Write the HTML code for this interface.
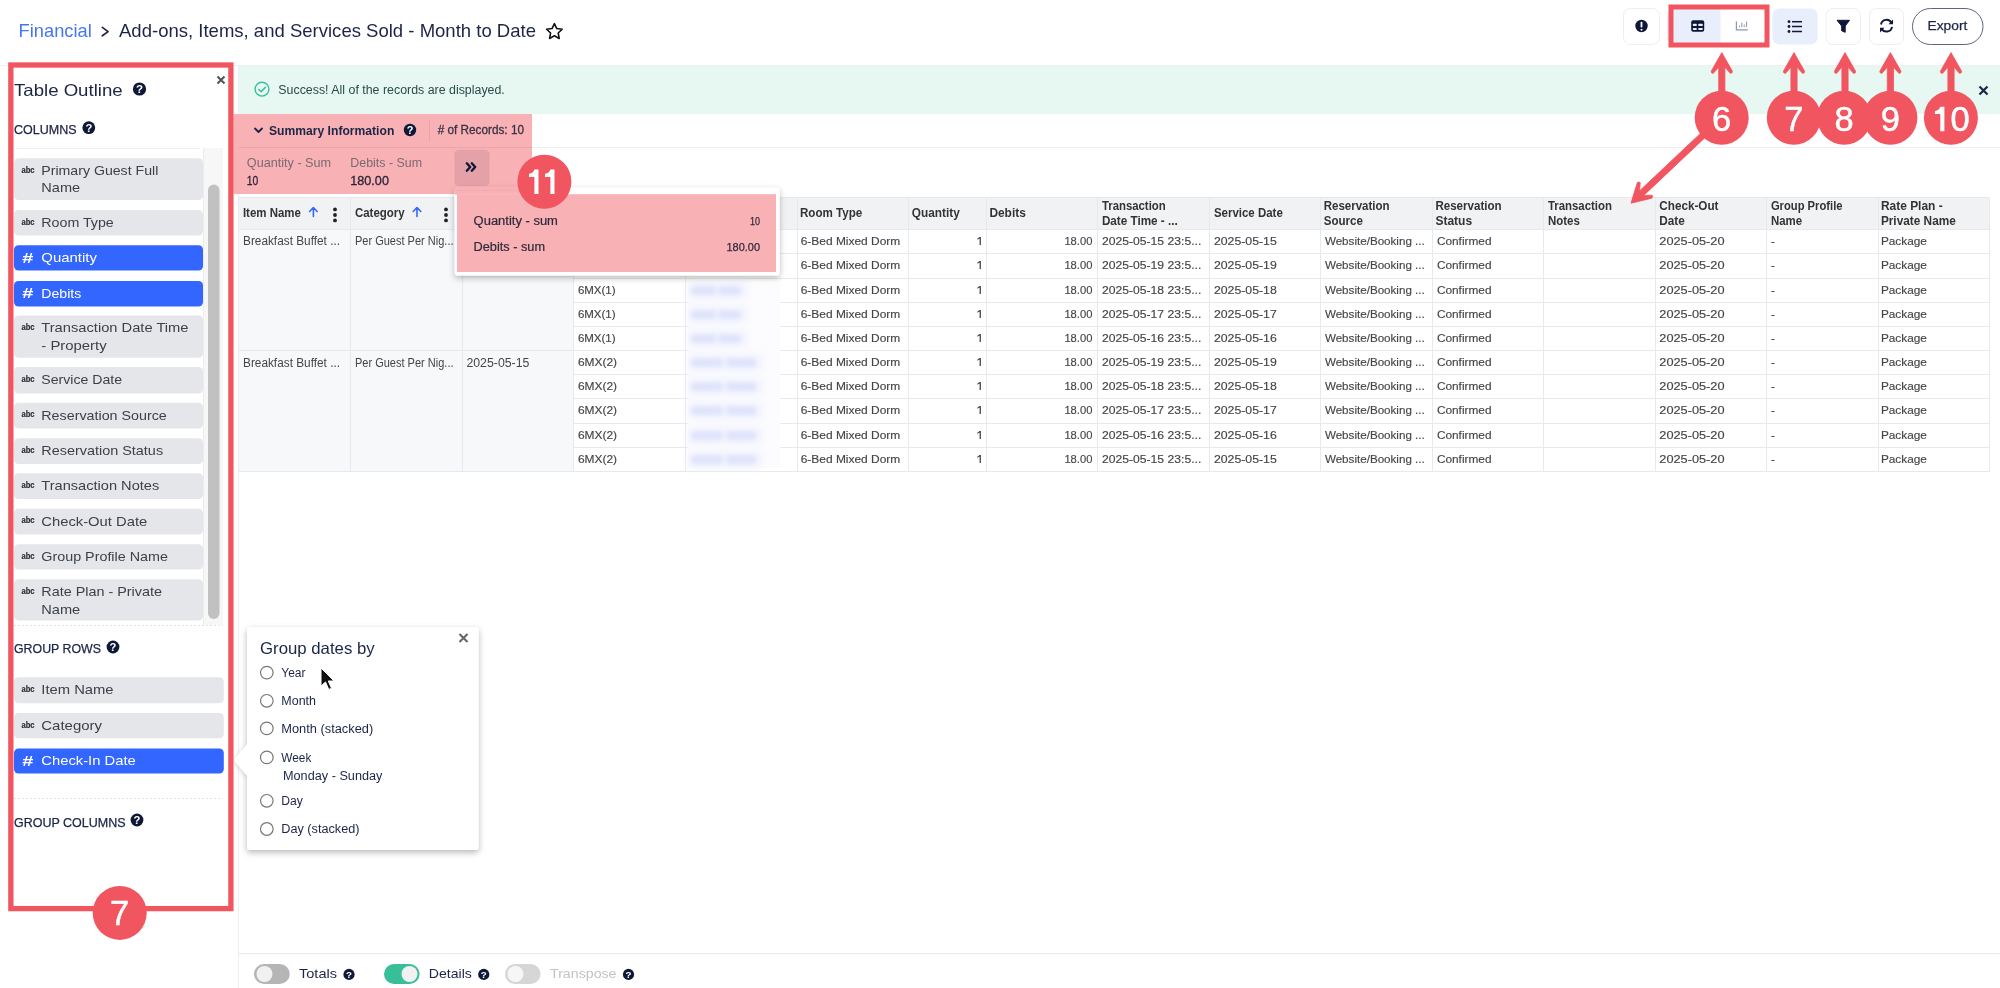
<!DOCTYPE html>
<html><head><meta charset="utf-8"><title>Add-ons, Items, and Services Sold - Month to Date</title>
<style>
html,body{margin:0;padding:0;background:#fff;width:2000px;height:988px;overflow:hidden}
svg{display:block;font-family:"Liberation Sans",sans-serif;will-change:transform}
</style></head><body>
<svg width="2000" height="988" viewBox="0 0 2000 988">
<rect width="2000" height="988" fill="#fff"/>
<text x="18.6" y="37.3" font-size="17.8" font-weight="400" fill="#4675f5" text-anchor="start" textLength="73.2" lengthAdjust="spacingAndGlyphs">Financial</text>
<path d="M102.3 27.4 L108.1 31.6 L102.3 35.8" fill="none" stroke="#1b2547" stroke-width="1.7" stroke-linecap="round" stroke-linejoin="round"/>
<text x="119.0" y="37.3" font-size="17.8" font-weight="400" fill="#1b2547" text-anchor="start" textLength="417.0" lengthAdjust="spacingAndGlyphs">Add-ons, Items, and Services Sold - Month to Date</text>
<polygon points="554.40,23.60 556.75,28.56 562.20,29.27 558.20,33.04 559.22,38.43 554.40,35.80 549.58,38.43 550.60,33.04 546.60,29.27 552.05,28.56" fill="none" stroke="#111" stroke-width="1.6" stroke-linejoin="round"/>
<line x1="0.00" y1="65.50" x2="2000.00" y2="65.50" stroke="#eef0f3" stroke-width="1"/>
<rect x="1623.50" y="8.50" width="36.00" height="36.00" rx="7" fill="#fff" stroke="#eceef2" stroke-width="1"/>
<circle cx="1641.50" cy="26.00" r="6.20" fill="#0f1838"/>
<rect x="1640.60" y="21.80" width="1.80" height="5.70" rx="0.8" fill="#fff"/>
<circle cx="1641.50" cy="29.70" r="1.00" fill="#fff"/>
<rect x="1667.50" y="8.50" width="98.00" height="36.00" rx="7" fill="#fff" stroke="#eceef2" stroke-width="1"/>
<path d="M1674 9 H1720.5 V44 H1674 A6 6 0 0 1 1668 38 V15 A6 6 0 0 1 1674 9 Z" fill="#e8eefc"/>
<rect x="1691.20" y="20.20" width="13.00" height="11.60" rx="2.0" fill="#0d1633"/>
<rect x="1692.80" y="23.80" width="4.00" height="2.20" rx="0.8" fill="#e8eefc"/>
<rect x="1698.20" y="23.80" width="4.60" height="2.20" rx="0.8" fill="#e8eefc"/>
<rect x="1692.80" y="28.00" width="4.00" height="2.00" rx="0.8" fill="#e8eefc"/>
<rect x="1698.20" y="28.00" width="4.60" height="2.00" rx="0.8" fill="#e8eefc"/>
<path d="M1736.4 21.4 V29.9 H1747.8" fill="none" stroke="#8c96b0" stroke-width="1.2"/>
<line x1="1739.60" y1="25.50" x2="1739.60" y2="27.20" stroke="#8c96b0" stroke-width="1.0"/>
<line x1="1741.80" y1="22.50" x2="1741.80" y2="27.20" stroke="#8c96b0" stroke-width="1.0"/>
<line x1="1744.20" y1="24.50" x2="1744.20" y2="27.20" stroke="#8c96b0" stroke-width="1.0"/>
<line x1="1746.60" y1="21.50" x2="1746.60" y2="27.20" stroke="#8c96b0" stroke-width="1.0"/>
<rect x="1671.00" y="7.00" width="96.00" height="38.00" rx="0" fill="none" stroke="#f1555f" stroke-width="5"/>
<rect x="1772.40" y="8.40" width="45.20" height="36.00" rx="7" fill="#e8eefc"/>
<circle cx="1789.00" cy="21.70" r="1.40" fill="#0f1838"/>
<circle cx="1789.00" cy="26.50" r="1.40" fill="#0f1838"/>
<circle cx="1789.00" cy="31.50" r="1.40" fill="#0f1838"/>
<line x1="1792.00" y1="21.70" x2="1802.00" y2="21.70" stroke="#0f1838" stroke-width="1.5"/>
<line x1="1792.00" y1="26.50" x2="1802.00" y2="26.50" stroke="#0f1838" stroke-width="1.5"/>
<line x1="1792.00" y1="31.50" x2="1802.00" y2="31.50" stroke="#0f1838" stroke-width="1.5"/>
<rect x="1826.00" y="8.50" width="34.50" height="36.00" rx="7" fill="#fff" stroke="#eceef2" stroke-width="1"/>
<path d="M1837 20.3 H1849.5 L1845.2 26 V32.3 L1841.7 30.8 V26 Z" fill="#0f1838" stroke="#0f1838" stroke-width="1" stroke-linejoin="round"/>
<rect x="1869.50" y="8.50" width="34.00" height="36.00" rx="7" fill="#fff" stroke="#eceef2" stroke-width="1"/>
<path d="M1881 24.5 A5.6 5.6 0 0 1 1891.5 22.8" fill="none" stroke="#0f1838" stroke-width="1.9"/>
<path d="M1892 26.8 A5.6 5.6 0 0 1 1881.5 28.5" fill="none" stroke="#0f1838" stroke-width="1.9"/>
<path d="M1893 19.5 V24.2 H1888.5 Z" fill="#0f1838"/>
<path d="M1880 32.5 V27.8 H1884.5 Z" fill="#0f1838"/>
<rect x="1912.50" y="8.50" width="70.50" height="36.00" rx="18" fill="#fff" stroke="#5e6680" stroke-width="1"/>
<text x="1927.5" y="29.8" font-size="13.5" font-weight="400" fill="#1b2547" text-anchor="start" textLength="39.8" lengthAdjust="spacingAndGlyphs" stroke="#1b2547" stroke-width="0.25">Export</text>
<line x1="238.50" y1="65.00" x2="238.50" y2="988.00" stroke="#eceef1" stroke-width="1"/>
<text x="14.0" y="95.5" font-size="16.5" font-weight="400" fill="#1b2547" text-anchor="start" textLength="108.6" lengthAdjust="spacingAndGlyphs">Table Outline</text>
<circle cx="139.50" cy="89.00" r="6.60" fill="#0f1838"/>
<text x="139.5" y="93.1" font-size="11.549999999999999" font-weight="700" fill="#ffffff" text-anchor="middle">?</text>
<path d="M217.5 76.5 L224.5 83.5 M224.5 76.5 L217.5 83.5" fill="none" stroke="#555" stroke-width="2.1"/>
<text x="14.0" y="134.0" font-size="12.3" font-weight="400" fill="#1b2547" text-anchor="start" textLength="62.5" lengthAdjust="spacingAndGlyphs" stroke="#1b2547" stroke-width="0.25">COLUMNS</text>
<circle cx="88.80" cy="127.70" r="6.40" fill="#0f1838"/>
<text x="88.8" y="131.7" font-size="11.200000000000001" font-weight="700" fill="#ffffff" text-anchor="middle">?</text>
<line x1="16.00" y1="148.50" x2="200.00" y2="148.50" stroke="#eeeeee" stroke-width="1"/>
<rect x="203.00" y="148.00" width="20.00" height="477.00" rx="0" fill="#f7f7f7"/>
<line x1="203.50" y1="148.00" x2="203.50" y2="625.00" stroke="#ececec" stroke-width="1"/>
<rect x="208.00" y="184.60" width="11.50" height="434.40" rx="5.7" fill="#c1c1c1"/>
<rect x="14.00" y="158.20" width="189.00" height="41.80" rx="4.5" fill="#e5e6ea"/>
<text x="21.5" y="172.7" font-size="8.4" font-weight="700" fill="#2e3138" text-anchor="start" textLength="13.1" lengthAdjust="spacingAndGlyphs" stroke="#2e3138" stroke-width="0.2">abc</text>
<text x="41.3" y="174.9" font-size="13.5" font-weight="400" fill="#3d4047" text-anchor="start" textLength="117.0" lengthAdjust="spacingAndGlyphs">Primary Guest Full</text>
<text x="41.3" y="192.4" font-size="13.5" font-weight="400" fill="#3d4047" text-anchor="start" textLength="38.8" lengthAdjust="spacingAndGlyphs">Name</text>
<rect x="14.00" y="210.00" width="189.00" height="25.60" rx="4.5" fill="#e5e6ea"/>
<text x="21.5" y="224.5" font-size="8.4" font-weight="700" fill="#2e3138" text-anchor="start" textLength="13.1" lengthAdjust="spacingAndGlyphs" stroke="#2e3138" stroke-width="0.2">abc</text>
<text x="41.3" y="226.7" font-size="13.5" font-weight="400" fill="#3d4047" text-anchor="start" textLength="72.5" lengthAdjust="spacingAndGlyphs">Room Type</text>
<rect x="14.00" y="245.30" width="189.00" height="25.30" rx="4.5" fill="#3366ff"/>
<text x="22.2" y="262.5" font-size="14" font-weight="700" fill="#fff" text-anchor="start" textLength="11.1" lengthAdjust="spacingAndGlyphs">#</text>
<text x="41.3" y="262.0" font-size="13.5" font-weight="400" fill="#ffffff" text-anchor="start" textLength="55.6" lengthAdjust="spacingAndGlyphs">Quantity</text>
<rect x="14.00" y="281.00" width="189.00" height="25.50" rx="4.5" fill="#3366ff"/>
<text x="22.2" y="298.2" font-size="14" font-weight="700" fill="#fff" text-anchor="start" textLength="11.1" lengthAdjust="spacingAndGlyphs">#</text>
<text x="41.3" y="297.7" font-size="13.5" font-weight="400" fill="#ffffff" text-anchor="start" textLength="40.0" lengthAdjust="spacingAndGlyphs">Debits</text>
<rect x="14.00" y="315.40" width="189.00" height="42.30" rx="4.5" fill="#e5e6ea"/>
<text x="21.5" y="329.9" font-size="8.4" font-weight="700" fill="#2e3138" text-anchor="start" textLength="13.1" lengthAdjust="spacingAndGlyphs" stroke="#2e3138" stroke-width="0.2">abc</text>
<text x="41.3" y="332.1" font-size="13.5" font-weight="400" fill="#3d4047" text-anchor="start" textLength="147.2" lengthAdjust="spacingAndGlyphs">Transaction Date Time</text>
<text x="41.3" y="349.6" font-size="13.5" font-weight="400" fill="#3d4047" text-anchor="start" textLength="65.3" lengthAdjust="spacingAndGlyphs">- Property</text>
<rect x="14.00" y="367.00" width="189.00" height="26.50" rx="4.5" fill="#e5e6ea"/>
<text x="21.5" y="381.5" font-size="8.4" font-weight="700" fill="#2e3138" text-anchor="start" textLength="13.1" lengthAdjust="spacingAndGlyphs" stroke="#2e3138" stroke-width="0.2">abc</text>
<text x="41.3" y="383.7" font-size="13.5" font-weight="400" fill="#3d4047" text-anchor="start" textLength="80.8" lengthAdjust="spacingAndGlyphs">Service Date</text>
<rect x="14.00" y="402.80" width="189.00" height="25.80" rx="4.5" fill="#e5e6ea"/>
<text x="21.5" y="417.3" font-size="8.4" font-weight="700" fill="#2e3138" text-anchor="start" textLength="13.1" lengthAdjust="spacingAndGlyphs" stroke="#2e3138" stroke-width="0.2">abc</text>
<text x="41.3" y="419.5" font-size="13.5" font-weight="400" fill="#3d4047" text-anchor="start" textLength="125.5" lengthAdjust="spacingAndGlyphs">Reservation Source</text>
<rect x="14.00" y="438.20" width="189.00" height="25.80" rx="4.5" fill="#e5e6ea"/>
<text x="21.5" y="452.7" font-size="8.4" font-weight="700" fill="#2e3138" text-anchor="start" textLength="13.1" lengthAdjust="spacingAndGlyphs" stroke="#2e3138" stroke-width="0.2">abc</text>
<text x="41.3" y="454.9" font-size="13.5" font-weight="400" fill="#3d4047" text-anchor="start" textLength="121.8" lengthAdjust="spacingAndGlyphs">Reservation Status</text>
<rect x="14.00" y="473.30" width="189.00" height="25.80" rx="4.5" fill="#e5e6ea"/>
<text x="21.5" y="487.8" font-size="8.4" font-weight="700" fill="#2e3138" text-anchor="start" textLength="13.1" lengthAdjust="spacingAndGlyphs" stroke="#2e3138" stroke-width="0.2">abc</text>
<text x="41.3" y="490.0" font-size="13.5" font-weight="400" fill="#3d4047" text-anchor="start" textLength="118.0" lengthAdjust="spacingAndGlyphs">Transaction Notes</text>
<rect x="14.00" y="508.80" width="189.00" height="25.80" rx="4.5" fill="#e5e6ea"/>
<text x="21.5" y="523.3" font-size="8.4" font-weight="700" fill="#2e3138" text-anchor="start" textLength="13.1" lengthAdjust="spacingAndGlyphs" stroke="#2e3138" stroke-width="0.2">abc</text>
<text x="41.3" y="525.5" font-size="13.5" font-weight="400" fill="#3d4047" text-anchor="start" textLength="106.0" lengthAdjust="spacingAndGlyphs">Check-Out Date</text>
<rect x="14.00" y="544.20" width="189.00" height="25.40" rx="4.5" fill="#e5e6ea"/>
<text x="21.5" y="558.7" font-size="8.4" font-weight="700" fill="#2e3138" text-anchor="start" textLength="13.1" lengthAdjust="spacingAndGlyphs" stroke="#2e3138" stroke-width="0.2">abc</text>
<text x="41.3" y="560.9" font-size="13.5" font-weight="400" fill="#3d4047" text-anchor="start" textLength="126.6" lengthAdjust="spacingAndGlyphs">Group Profile Name</text>
<rect x="14.00" y="579.30" width="189.00" height="41.10" rx="4.5" fill="#e5e6ea"/>
<text x="21.5" y="593.8" font-size="8.4" font-weight="700" fill="#2e3138" text-anchor="start" textLength="13.1" lengthAdjust="spacingAndGlyphs" stroke="#2e3138" stroke-width="0.2">abc</text>
<text x="41.3" y="596.0" font-size="13.5" font-weight="400" fill="#3d4047" text-anchor="start" textLength="120.7" lengthAdjust="spacingAndGlyphs">Rate Plan - Private</text>
<text x="41.3" y="613.5" font-size="13.5" font-weight="400" fill="#3d4047" text-anchor="start" textLength="38.9" lengthAdjust="spacingAndGlyphs">Name</text>
<line x1="14.00" y1="625.50" x2="223.00" y2="625.50" stroke="#e3e3e3" stroke-width="1" stroke-dasharray="2 2"/>
<text x="14.0" y="653.3" font-size="12.3" font-weight="400" fill="#1b2547" text-anchor="start" textLength="87.0" lengthAdjust="spacingAndGlyphs" stroke="#1b2547" stroke-width="0.25">GROUP ROWS</text>
<circle cx="113.00" cy="647.00" r="6.40" fill="#0f1838"/>
<text x="113.0" y="651.0" font-size="11.200000000000001" font-weight="700" fill="#ffffff" text-anchor="middle">?</text>
<rect x="14.00" y="677.30" width="209.80" height="26.00" rx="4.5" fill="#e5e6ea"/>
<text x="21.5" y="691.8" font-size="8.4" font-weight="700" fill="#2e3138" text-anchor="start" textLength="13.1" lengthAdjust="spacingAndGlyphs" stroke="#2e3138" stroke-width="0.2">abc</text>
<text x="41.3" y="694.0" font-size="13.5" font-weight="400" fill="#3d4047" text-anchor="start" textLength="72.3" lengthAdjust="spacingAndGlyphs">Item Name</text>
<rect x="14.00" y="713.00" width="209.80" height="25.20" rx="4.5" fill="#e5e6ea"/>
<text x="21.5" y="727.5" font-size="8.4" font-weight="700" fill="#2e3138" text-anchor="start" textLength="13.1" lengthAdjust="spacingAndGlyphs" stroke="#2e3138" stroke-width="0.2">abc</text>
<text x="41.3" y="729.7" font-size="13.5" font-weight="400" fill="#3d4047" text-anchor="start" textLength="60.8" lengthAdjust="spacingAndGlyphs">Category</text>
<rect x="14.00" y="748.40" width="209.80" height="25.10" rx="4.5" fill="#3366ff"/>
<text x="22.2" y="765.5" font-size="14" font-weight="700" fill="#fff" text-anchor="start" textLength="11.1" lengthAdjust="spacingAndGlyphs">#</text>
<text x="41.3" y="765.1" font-size="13.5" font-weight="400" fill="#ffffff" text-anchor="start" textLength="94.5" lengthAdjust="spacingAndGlyphs">Check-In Date</text>
<line x1="14.00" y1="798.50" x2="223.00" y2="798.50" stroke="#e3e3e3" stroke-width="1" stroke-dasharray="2 2"/>
<text x="14.0" y="826.9" font-size="12.3" font-weight="400" fill="#1b2547" text-anchor="start" textLength="111.6" lengthAdjust="spacingAndGlyphs" stroke="#1b2547" stroke-width="0.25">GROUP COLUMNS</text>
<circle cx="137.00" cy="820.00" r="6.40" fill="#0f1838"/>
<text x="137.0" y="824.0" font-size="11.200000000000001" font-weight="700" fill="#ffffff" text-anchor="middle">?</text>
<rect x="238.50" y="66.00" width="1761.50" height="48.00" rx="0" fill="#e7f8f3"/>
<circle cx="262.00" cy="89.20" r="6.90" fill="none" stroke="#3cbf98" stroke-width="1.4"/>
<path d="M258.8 89.5 L261.2 91.8 L265.4 87.2" fill="none" stroke="#3cbf98" stroke-width="1.5" stroke-linecap="round" stroke-linejoin="round"/>
<text x="278.3" y="93.7" font-size="12" font-weight="400" fill="#2b4a48" text-anchor="start" textLength="226.5" lengthAdjust="spacingAndGlyphs">Success! All of the records are displayed.</text>
<path d="M1979.5 86.5 L1987.5 94.5 M1987.5 86.5 L1979.5 94.5" fill="none" stroke="#1b2547" stroke-width="2.2"/>
<line x1="238.50" y1="147.50" x2="2000.00" y2="147.50" stroke="#eceef1" stroke-width="1"/>
<rect x="233.50" y="114.00" width="298.50" height="80.00" rx="0" fill="#f8b1b5"/>
<line x1="238.50" y1="147.50" x2="532.00" y2="147.50" stroke="#eba4aa" stroke-width="1"/>
<line x1="429.50" y1="120.00" x2="429.50" y2="142.00" stroke="#eba4aa" stroke-width="1"/>
<path d="M255 128.5 L258.5 132 L262 128.5" fill="none" stroke="#1b2547" stroke-width="1.8" stroke-linecap="round" stroke-linejoin="round"/>
<text x="269.0" y="134.9" font-size="12.5" font-weight="700" fill="#1b2547" text-anchor="start" textLength="125.3" lengthAdjust="spacingAndGlyphs">Summary Information</text>
<circle cx="410.00" cy="130.00" r="6.20" fill="#0f1838"/>
<text x="410.0" y="133.8" font-size="10.85" font-weight="700" fill="#ffffff" text-anchor="middle">?</text>
<text x="437.7" y="134.3" font-size="12" font-weight="400" fill="#3a3344" text-anchor="start" textLength="86.3" lengthAdjust="spacingAndGlyphs" stroke="#3a3344" stroke-width="0.3"># of Records: 10</text>
<text x="246.8" y="167.1" font-size="12" font-weight="400" fill="#7a6a72" text-anchor="start" textLength="84.3" lengthAdjust="spacingAndGlyphs">Quantity - Sum</text>
<text x="246.8" y="184.5" font-size="13" font-weight="400" fill="#2a2436" text-anchor="start" textLength="11.5" lengthAdjust="spacingAndGlyphs" stroke="#2a2436" stroke-width="0.3">10</text>
<text x="350.3" y="167.1" font-size="12" font-weight="400" fill="#7a6a72" text-anchor="start" textLength="71.7" lengthAdjust="spacingAndGlyphs">Debits - Sum</text>
<text x="350.3" y="184.5" font-size="13" font-weight="400" fill="#2a2436" text-anchor="start" textLength="38.6" lengthAdjust="spacingAndGlyphs" stroke="#2a2436" stroke-width="0.3">180.00</text>
<rect x="454.50" y="149.80" width="35.00" height="36.60" rx="4.5" fill="#e4a2a8"/>
<path d="M466.8 163.3 L470.2 167 L466.8 170.7 M471.8 163.3 L475.2 167 L471.8 170.7" fill="none" stroke="#0f1838" stroke-width="2.4" stroke-linecap="round" stroke-linejoin="round"/>
<rect x="238.50" y="197.50" width="1751.00" height="32.00" rx="0" fill="#f1f2f4"/>
<rect x="238.50" y="229.50" width="335.00" height="242.00" rx="0" fill="#f7f8fa"/>
<line x1="238.50" y1="197.50" x2="1989.50" y2="197.50" stroke="#e7e9ec" stroke-width="1"/>
<line x1="238.50" y1="229.50" x2="1989.50" y2="229.50" stroke="#e7e9ec" stroke-width="1"/>
<line x1="573.50" y1="253.50" x2="1989.50" y2="253.50" stroke="#e7e9ec" stroke-width="1"/>
<line x1="573.50" y1="278.50" x2="1989.50" y2="278.50" stroke="#e7e9ec" stroke-width="1"/>
<line x1="573.50" y1="302.50" x2="1989.50" y2="302.50" stroke="#e7e9ec" stroke-width="1"/>
<line x1="573.50" y1="326.50" x2="1989.50" y2="326.50" stroke="#e7e9ec" stroke-width="1"/>
<line x1="238.50" y1="350.50" x2="1989.50" y2="350.50" stroke="#e7e9ec" stroke-width="1"/>
<line x1="573.50" y1="374.50" x2="1989.50" y2="374.50" stroke="#e7e9ec" stroke-width="1"/>
<line x1="573.50" y1="398.50" x2="1989.50" y2="398.50" stroke="#e7e9ec" stroke-width="1"/>
<line x1="573.50" y1="423.50" x2="1989.50" y2="423.50" stroke="#e7e9ec" stroke-width="1"/>
<line x1="573.50" y1="447.50" x2="1989.50" y2="447.50" stroke="#e7e9ec" stroke-width="1"/>
<line x1="238.50" y1="471.50" x2="1989.50" y2="471.50" stroke="#e7e9ec" stroke-width="1"/>
<line x1="238.50" y1="197.50" x2="238.50" y2="471.50" stroke="#e7e9ec" stroke-width="1"/>
<line x1="350.50" y1="197.50" x2="350.50" y2="471.50" stroke="#e7e9ec" stroke-width="1"/>
<line x1="462.50" y1="197.50" x2="462.50" y2="471.50" stroke="#e7e9ec" stroke-width="1"/>
<line x1="573.50" y1="197.50" x2="573.50" y2="471.50" stroke="#e7e9ec" stroke-width="1"/>
<line x1="685.50" y1="197.50" x2="685.50" y2="471.50" stroke="#e7e9ec" stroke-width="1"/>
<line x1="797.50" y1="197.50" x2="797.50" y2="471.50" stroke="#e7e9ec" stroke-width="1"/>
<line x1="908.50" y1="197.50" x2="908.50" y2="471.50" stroke="#e7e9ec" stroke-width="1"/>
<line x1="986.50" y1="197.50" x2="986.50" y2="471.50" stroke="#e7e9ec" stroke-width="1"/>
<line x1="1097.50" y1="197.50" x2="1097.50" y2="471.50" stroke="#e7e9ec" stroke-width="1"/>
<line x1="1209.50" y1="197.50" x2="1209.50" y2="471.50" stroke="#e7e9ec" stroke-width="1"/>
<line x1="1320.50" y1="197.50" x2="1320.50" y2="471.50" stroke="#e7e9ec" stroke-width="1"/>
<line x1="1432.50" y1="197.50" x2="1432.50" y2="471.50" stroke="#e7e9ec" stroke-width="1"/>
<line x1="1543.50" y1="197.50" x2="1543.50" y2="471.50" stroke="#e7e9ec" stroke-width="1"/>
<line x1="1655.50" y1="197.50" x2="1655.50" y2="471.50" stroke="#e7e9ec" stroke-width="1"/>
<line x1="1766.50" y1="197.50" x2="1766.50" y2="471.50" stroke="#e7e9ec" stroke-width="1"/>
<line x1="1878.50" y1="197.50" x2="1878.50" y2="471.50" stroke="#e7e9ec" stroke-width="1"/>
<line x1="1989.50" y1="197.50" x2="1989.50" y2="471.50" stroke="#e7e9ec" stroke-width="1"/>
<text x="242.9" y="217.0" font-size="12" font-weight="700" fill="#333333" text-anchor="start" textLength="58.0" lengthAdjust="spacingAndGlyphs">Item Name</text>
<text x="354.9" y="217.0" font-size="12" font-weight="700" fill="#333333" text-anchor="start" textLength="49.8" lengthAdjust="spacingAndGlyphs">Category</text>
<path d="M313.4 216.5 V208 M309.59999999999997 211.5 L313.4 207.5 L317.2 211.5" fill="none" stroke="#3467fb" stroke-width="1.6" stroke-linecap="round" stroke-linejoin="round"/>
<path d="M417 216.5 V208 M413.2 211.5 L417 207.5 L420.8 211.5" fill="none" stroke="#3467fb" stroke-width="1.6" stroke-linecap="round" stroke-linejoin="round"/>
<circle cx="335.00" cy="209.40" r="1.90" fill="#222"/>
<circle cx="335.00" cy="215.00" r="1.90" fill="#222"/>
<circle cx="335.00" cy="220.40" r="1.90" fill="#222"/>
<circle cx="446.00" cy="209.40" r="1.90" fill="#222"/>
<circle cx="446.00" cy="215.00" r="1.90" fill="#222"/>
<circle cx="446.00" cy="220.40" r="1.90" fill="#222"/>
<text x="799.9" y="217.0" font-size="12" font-weight="700" fill="#333333" text-anchor="start" textLength="62.4" lengthAdjust="spacingAndGlyphs">Room Type</text>
<text x="911.8" y="217.0" font-size="12" font-weight="700" fill="#333333" text-anchor="start" textLength="47.9" lengthAdjust="spacingAndGlyphs">Quantity</text>
<text x="989.4" y="217.0" font-size="12" font-weight="700" fill="#333333" text-anchor="start" textLength="36.4" lengthAdjust="spacingAndGlyphs">Debits</text>
<text x="1101.9" y="210.4" font-size="12" font-weight="700" fill="#333333" text-anchor="start" textLength="63.8" lengthAdjust="spacingAndGlyphs">Transaction</text>
<text x="1101.9" y="224.6" font-size="12" font-weight="700" fill="#333333" text-anchor="start" textLength="75.9" lengthAdjust="spacingAndGlyphs">Date Time - ...</text>
<text x="1213.9" y="217.0" font-size="12" font-weight="700" fill="#333333" text-anchor="start" textLength="68.9" lengthAdjust="spacingAndGlyphs">Service Date</text>
<text x="1323.7" y="210.4" font-size="12" font-weight="700" fill="#333333" text-anchor="start" textLength="65.9" lengthAdjust="spacingAndGlyphs">Reservation</text>
<text x="1323.7" y="224.6" font-size="12" font-weight="700" fill="#333333" text-anchor="start" textLength="39.2" lengthAdjust="spacingAndGlyphs">Source</text>
<text x="1435.4" y="210.4" font-size="12" font-weight="700" fill="#333333" text-anchor="start" textLength="66.2" lengthAdjust="spacingAndGlyphs">Reservation</text>
<text x="1435.4" y="224.6" font-size="12" font-weight="700" fill="#333333" text-anchor="start" textLength="36.7" lengthAdjust="spacingAndGlyphs">Status</text>
<text x="1547.9" y="210.4" font-size="12" font-weight="700" fill="#333333" text-anchor="start" textLength="64.1" lengthAdjust="spacingAndGlyphs">Transaction</text>
<text x="1547.9" y="224.6" font-size="12" font-weight="700" fill="#333333" text-anchor="start" textLength="31.9" lengthAdjust="spacingAndGlyphs">Notes</text>
<text x="1659.3" y="210.4" font-size="12" font-weight="700" fill="#333333" text-anchor="start" textLength="59.2" lengthAdjust="spacingAndGlyphs">Check-Out</text>
<text x="1659.3" y="224.6" font-size="12" font-weight="700" fill="#333333" text-anchor="start" textLength="25.5" lengthAdjust="spacingAndGlyphs">Date</text>
<text x="1770.9" y="210.4" font-size="12" font-weight="700" fill="#333333" text-anchor="start" textLength="71.6" lengthAdjust="spacingAndGlyphs">Group Profile</text>
<text x="1770.9" y="224.6" font-size="12" font-weight="700" fill="#333333" text-anchor="start" textLength="31.2" lengthAdjust="spacingAndGlyphs">Name</text>
<text x="1880.9" y="210.4" font-size="12" font-weight="700" fill="#333333" text-anchor="start" textLength="61.8" lengthAdjust="spacingAndGlyphs">Rate Plan -</text>
<text x="1880.9" y="224.6" font-size="12" font-weight="700" fill="#333333" text-anchor="start" textLength="74.9" lengthAdjust="spacingAndGlyphs">Private Name</text>
<text x="243.0" y="245.3" font-size="12" font-weight="400" fill="#454545" text-anchor="start" textLength="97.0" lengthAdjust="spacingAndGlyphs">Breakfast Buffet ...</text>
<text x="355.0" y="245.3" font-size="12" font-weight="400" fill="#454545" text-anchor="start" textLength="98.5" lengthAdjust="spacingAndGlyphs">Per Guest Per Nig...</text>
<text x="243.0" y="366.6" font-size="12" font-weight="400" fill="#454545" text-anchor="start" textLength="97.0" lengthAdjust="spacingAndGlyphs">Breakfast Buffet ...</text>
<text x="355.0" y="366.6" font-size="12" font-weight="400" fill="#454545" text-anchor="start" textLength="98.5" lengthAdjust="spacingAndGlyphs">Per Guest Per Nig...</text>
<text x="466.4" y="366.6" font-size="12" font-weight="400" fill="#454545" text-anchor="start" textLength="63.0" lengthAdjust="spacingAndGlyphs">2025-05-15</text>
<defs><filter id="bl" x="-50%" y="-150%" width="200%" height="400%"><feGaussianBlur stdDeviation="2.3"/></filter></defs>
<text x="577.9" y="245.4" font-size="11.4" font-weight="400" fill="#454545" text-anchor="start" textLength="37.7" lengthAdjust="spacingAndGlyphs" stroke="#454545" stroke-width="0.15">6MX(1)</text>
<text x="800.7" y="245.4" font-size="11.4" font-weight="400" fill="#454545" text-anchor="start" textLength="99.6" lengthAdjust="spacingAndGlyphs" stroke="#454545" stroke-width="0.15">6-Bed Mixed Dorm</text>
<path d="M979.6 237.00 H980.9 V245.00 H979.6 V238.60 L977.4 239.80 V238.60 Z" fill="#454545"/>
<text x="1092.4" y="245.4" font-size="11.4" font-weight="400" fill="#454545" text-anchor="end" textLength="28.0" lengthAdjust="spacingAndGlyphs" stroke="#454545" stroke-width="0.15">18.00</text>
<text x="1101.9" y="245.4" font-size="11.4" font-weight="400" fill="#454545" text-anchor="start" textLength="99.4" lengthAdjust="spacingAndGlyphs" stroke="#454545" stroke-width="0.15">2025-05-15 23:5...</text>
<text x="1213.9" y="245.4" font-size="11.4" font-weight="400" fill="#454545" text-anchor="start" textLength="62.9" lengthAdjust="spacingAndGlyphs" stroke="#454545" stroke-width="0.15">2025-05-15</text>
<text x="1324.9" y="245.4" font-size="11.4" font-weight="400" fill="#454545" text-anchor="start" textLength="99.9" lengthAdjust="spacingAndGlyphs" stroke="#454545" stroke-width="0.15">Website/Booking ...</text>
<text x="1436.9" y="245.4" font-size="11.4" font-weight="400" fill="#454545" text-anchor="start" textLength="54.6" lengthAdjust="spacingAndGlyphs" stroke="#454545" stroke-width="0.15">Confirmed</text>
<text x="1659.3" y="245.4" font-size="11.4" font-weight="400" fill="#454545" text-anchor="start" textLength="65.2" lengthAdjust="spacingAndGlyphs" stroke="#454545" stroke-width="0.15">2025-05-20</text>
<text x="1770.9" y="245.4" font-size="11.4" font-weight="400" fill="#454545" text-anchor="start" stroke="#454545" stroke-width="0.15">-</text>
<text x="1880.9" y="245.4" font-size="11.4" font-weight="400" fill="#454545" text-anchor="start" textLength="46.0" lengthAdjust="spacingAndGlyphs" stroke="#454545" stroke-width="0.15">Package</text>
<text x="577.9" y="269.4" font-size="11.4" font-weight="400" fill="#454545" text-anchor="start" textLength="37.7" lengthAdjust="spacingAndGlyphs" stroke="#454545" stroke-width="0.15">6MX(1)</text>
<text x="800.7" y="269.4" font-size="11.4" font-weight="400" fill="#454545" text-anchor="start" textLength="99.6" lengthAdjust="spacingAndGlyphs" stroke="#454545" stroke-width="0.15">6-Bed Mixed Dorm</text>
<path d="M979.6 261.00 H980.9 V269.00 H979.6 V262.60 L977.4 263.80 V262.60 Z" fill="#454545"/>
<text x="1092.4" y="269.4" font-size="11.4" font-weight="400" fill="#454545" text-anchor="end" textLength="28.0" lengthAdjust="spacingAndGlyphs" stroke="#454545" stroke-width="0.15">18.00</text>
<text x="1101.9" y="269.4" font-size="11.4" font-weight="400" fill="#454545" text-anchor="start" textLength="99.4" lengthAdjust="spacingAndGlyphs" stroke="#454545" stroke-width="0.15">2025-05-19 23:5...</text>
<text x="1213.9" y="269.4" font-size="11.4" font-weight="400" fill="#454545" text-anchor="start" textLength="62.9" lengthAdjust="spacingAndGlyphs" stroke="#454545" stroke-width="0.15">2025-05-19</text>
<text x="1324.9" y="269.4" font-size="11.4" font-weight="400" fill="#454545" text-anchor="start" textLength="99.9" lengthAdjust="spacingAndGlyphs" stroke="#454545" stroke-width="0.15">Website/Booking ...</text>
<text x="1436.9" y="269.4" font-size="11.4" font-weight="400" fill="#454545" text-anchor="start" textLength="54.6" lengthAdjust="spacingAndGlyphs" stroke="#454545" stroke-width="0.15">Confirmed</text>
<text x="1659.3" y="269.4" font-size="11.4" font-weight="400" fill="#454545" text-anchor="start" textLength="65.2" lengthAdjust="spacingAndGlyphs" stroke="#454545" stroke-width="0.15">2025-05-20</text>
<text x="1770.9" y="269.4" font-size="11.4" font-weight="400" fill="#454545" text-anchor="start" stroke="#454545" stroke-width="0.15">-</text>
<text x="1880.9" y="269.4" font-size="11.4" font-weight="400" fill="#454545" text-anchor="start" textLength="46.0" lengthAdjust="spacingAndGlyphs" stroke="#454545" stroke-width="0.15">Package</text>
<text x="577.9" y="294.4" font-size="11.4" font-weight="400" fill="#454545" text-anchor="start" textLength="37.7" lengthAdjust="spacingAndGlyphs" stroke="#454545" stroke-width="0.15">6MX(1)</text>
<text x="800.7" y="294.4" font-size="11.4" font-weight="400" fill="#454545" text-anchor="start" textLength="99.6" lengthAdjust="spacingAndGlyphs" stroke="#454545" stroke-width="0.15">6-Bed Mixed Dorm</text>
<path d="M979.6 286.00 H980.9 V294.00 H979.6 V287.60 L977.4 288.80 V287.60 Z" fill="#454545"/>
<text x="1092.4" y="294.4" font-size="11.4" font-weight="400" fill="#454545" text-anchor="end" textLength="28.0" lengthAdjust="spacingAndGlyphs" stroke="#454545" stroke-width="0.15">18.00</text>
<text x="1101.9" y="294.4" font-size="11.4" font-weight="400" fill="#454545" text-anchor="start" textLength="99.4" lengthAdjust="spacingAndGlyphs" stroke="#454545" stroke-width="0.15">2025-05-18 23:5...</text>
<text x="1213.9" y="294.4" font-size="11.4" font-weight="400" fill="#454545" text-anchor="start" textLength="62.9" lengthAdjust="spacingAndGlyphs" stroke="#454545" stroke-width="0.15">2025-05-18</text>
<text x="1324.9" y="294.4" font-size="11.4" font-weight="400" fill="#454545" text-anchor="start" textLength="99.9" lengthAdjust="spacingAndGlyphs" stroke="#454545" stroke-width="0.15">Website/Booking ...</text>
<text x="1436.9" y="294.4" font-size="11.4" font-weight="400" fill="#454545" text-anchor="start" textLength="54.6" lengthAdjust="spacingAndGlyphs" stroke="#454545" stroke-width="0.15">Confirmed</text>
<text x="1659.3" y="294.4" font-size="11.4" font-weight="400" fill="#454545" text-anchor="start" textLength="65.2" lengthAdjust="spacingAndGlyphs" stroke="#454545" stroke-width="0.15">2025-05-20</text>
<text x="1770.9" y="294.4" font-size="11.4" font-weight="400" fill="#454545" text-anchor="start" stroke="#454545" stroke-width="0.15">-</text>
<text x="1880.9" y="294.4" font-size="11.4" font-weight="400" fill="#454545" text-anchor="start" textLength="46.0" lengthAdjust="spacingAndGlyphs" stroke="#454545" stroke-width="0.15">Package</text>
<text x="577.9" y="318.4" font-size="11.4" font-weight="400" fill="#454545" text-anchor="start" textLength="37.7" lengthAdjust="spacingAndGlyphs" stroke="#454545" stroke-width="0.15">6MX(1)</text>
<text x="800.7" y="318.4" font-size="11.4" font-weight="400" fill="#454545" text-anchor="start" textLength="99.6" lengthAdjust="spacingAndGlyphs" stroke="#454545" stroke-width="0.15">6-Bed Mixed Dorm</text>
<path d="M979.6 310.00 H980.9 V318.00 H979.6 V311.60 L977.4 312.80 V311.60 Z" fill="#454545"/>
<text x="1092.4" y="318.4" font-size="11.4" font-weight="400" fill="#454545" text-anchor="end" textLength="28.0" lengthAdjust="spacingAndGlyphs" stroke="#454545" stroke-width="0.15">18.00</text>
<text x="1101.9" y="318.4" font-size="11.4" font-weight="400" fill="#454545" text-anchor="start" textLength="99.4" lengthAdjust="spacingAndGlyphs" stroke="#454545" stroke-width="0.15">2025-05-17 23:5...</text>
<text x="1213.9" y="318.4" font-size="11.4" font-weight="400" fill="#454545" text-anchor="start" textLength="62.9" lengthAdjust="spacingAndGlyphs" stroke="#454545" stroke-width="0.15">2025-05-17</text>
<text x="1324.9" y="318.4" font-size="11.4" font-weight="400" fill="#454545" text-anchor="start" textLength="99.9" lengthAdjust="spacingAndGlyphs" stroke="#454545" stroke-width="0.15">Website/Booking ...</text>
<text x="1436.9" y="318.4" font-size="11.4" font-weight="400" fill="#454545" text-anchor="start" textLength="54.6" lengthAdjust="spacingAndGlyphs" stroke="#454545" stroke-width="0.15">Confirmed</text>
<text x="1659.3" y="318.4" font-size="11.4" font-weight="400" fill="#454545" text-anchor="start" textLength="65.2" lengthAdjust="spacingAndGlyphs" stroke="#454545" stroke-width="0.15">2025-05-20</text>
<text x="1770.9" y="318.4" font-size="11.4" font-weight="400" fill="#454545" text-anchor="start" stroke="#454545" stroke-width="0.15">-</text>
<text x="1880.9" y="318.4" font-size="11.4" font-weight="400" fill="#454545" text-anchor="start" textLength="46.0" lengthAdjust="spacingAndGlyphs" stroke="#454545" stroke-width="0.15">Package</text>
<text x="577.9" y="342.4" font-size="11.4" font-weight="400" fill="#454545" text-anchor="start" textLength="37.7" lengthAdjust="spacingAndGlyphs" stroke="#454545" stroke-width="0.15">6MX(1)</text>
<text x="800.7" y="342.4" font-size="11.4" font-weight="400" fill="#454545" text-anchor="start" textLength="99.6" lengthAdjust="spacingAndGlyphs" stroke="#454545" stroke-width="0.15">6-Bed Mixed Dorm</text>
<path d="M979.6 334.00 H980.9 V342.00 H979.6 V335.60 L977.4 336.80 V335.60 Z" fill="#454545"/>
<text x="1092.4" y="342.4" font-size="11.4" font-weight="400" fill="#454545" text-anchor="end" textLength="28.0" lengthAdjust="spacingAndGlyphs" stroke="#454545" stroke-width="0.15">18.00</text>
<text x="1101.9" y="342.4" font-size="11.4" font-weight="400" fill="#454545" text-anchor="start" textLength="99.4" lengthAdjust="spacingAndGlyphs" stroke="#454545" stroke-width="0.15">2025-05-16 23:5...</text>
<text x="1213.9" y="342.4" font-size="11.4" font-weight="400" fill="#454545" text-anchor="start" textLength="62.9" lengthAdjust="spacingAndGlyphs" stroke="#454545" stroke-width="0.15">2025-05-16</text>
<text x="1324.9" y="342.4" font-size="11.4" font-weight="400" fill="#454545" text-anchor="start" textLength="99.9" lengthAdjust="spacingAndGlyphs" stroke="#454545" stroke-width="0.15">Website/Booking ...</text>
<text x="1436.9" y="342.4" font-size="11.4" font-weight="400" fill="#454545" text-anchor="start" textLength="54.6" lengthAdjust="spacingAndGlyphs" stroke="#454545" stroke-width="0.15">Confirmed</text>
<text x="1659.3" y="342.4" font-size="11.4" font-weight="400" fill="#454545" text-anchor="start" textLength="65.2" lengthAdjust="spacingAndGlyphs" stroke="#454545" stroke-width="0.15">2025-05-20</text>
<text x="1770.9" y="342.4" font-size="11.4" font-weight="400" fill="#454545" text-anchor="start" stroke="#454545" stroke-width="0.15">-</text>
<text x="1880.9" y="342.4" font-size="11.4" font-weight="400" fill="#454545" text-anchor="start" textLength="46.0" lengthAdjust="spacingAndGlyphs" stroke="#454545" stroke-width="0.15">Package</text>
<text x="577.9" y="366.4" font-size="11.4" font-weight="400" fill="#454545" text-anchor="start" textLength="39.2" lengthAdjust="spacingAndGlyphs" stroke="#454545" stroke-width="0.15">6MX(2)</text>
<text x="800.7" y="366.4" font-size="11.4" font-weight="400" fill="#454545" text-anchor="start" textLength="99.6" lengthAdjust="spacingAndGlyphs" stroke="#454545" stroke-width="0.15">6-Bed Mixed Dorm</text>
<path d="M979.6 358.00 H980.9 V366.00 H979.6 V359.60 L977.4 360.80 V359.60 Z" fill="#454545"/>
<text x="1092.4" y="366.4" font-size="11.4" font-weight="400" fill="#454545" text-anchor="end" textLength="28.0" lengthAdjust="spacingAndGlyphs" stroke="#454545" stroke-width="0.15">18.00</text>
<text x="1101.9" y="366.4" font-size="11.4" font-weight="400" fill="#454545" text-anchor="start" textLength="99.4" lengthAdjust="spacingAndGlyphs" stroke="#454545" stroke-width="0.15">2025-05-19 23:5...</text>
<text x="1213.9" y="366.4" font-size="11.4" font-weight="400" fill="#454545" text-anchor="start" textLength="62.9" lengthAdjust="spacingAndGlyphs" stroke="#454545" stroke-width="0.15">2025-05-19</text>
<text x="1324.9" y="366.4" font-size="11.4" font-weight="400" fill="#454545" text-anchor="start" textLength="99.9" lengthAdjust="spacingAndGlyphs" stroke="#454545" stroke-width="0.15">Website/Booking ...</text>
<text x="1436.9" y="366.4" font-size="11.4" font-weight="400" fill="#454545" text-anchor="start" textLength="54.6" lengthAdjust="spacingAndGlyphs" stroke="#454545" stroke-width="0.15">Confirmed</text>
<text x="1659.3" y="366.4" font-size="11.4" font-weight="400" fill="#454545" text-anchor="start" textLength="65.2" lengthAdjust="spacingAndGlyphs" stroke="#454545" stroke-width="0.15">2025-05-20</text>
<text x="1770.9" y="366.4" font-size="11.4" font-weight="400" fill="#454545" text-anchor="start" stroke="#454545" stroke-width="0.15">-</text>
<text x="1880.9" y="366.4" font-size="11.4" font-weight="400" fill="#454545" text-anchor="start" textLength="46.0" lengthAdjust="spacingAndGlyphs" stroke="#454545" stroke-width="0.15">Package</text>
<text x="577.9" y="390.4" font-size="11.4" font-weight="400" fill="#454545" text-anchor="start" textLength="39.2" lengthAdjust="spacingAndGlyphs" stroke="#454545" stroke-width="0.15">6MX(2)</text>
<text x="800.7" y="390.4" font-size="11.4" font-weight="400" fill="#454545" text-anchor="start" textLength="99.6" lengthAdjust="spacingAndGlyphs" stroke="#454545" stroke-width="0.15">6-Bed Mixed Dorm</text>
<path d="M979.6 382.00 H980.9 V390.00 H979.6 V383.60 L977.4 384.80 V383.60 Z" fill="#454545"/>
<text x="1092.4" y="390.4" font-size="11.4" font-weight="400" fill="#454545" text-anchor="end" textLength="28.0" lengthAdjust="spacingAndGlyphs" stroke="#454545" stroke-width="0.15">18.00</text>
<text x="1101.9" y="390.4" font-size="11.4" font-weight="400" fill="#454545" text-anchor="start" textLength="99.4" lengthAdjust="spacingAndGlyphs" stroke="#454545" stroke-width="0.15">2025-05-18 23:5...</text>
<text x="1213.9" y="390.4" font-size="11.4" font-weight="400" fill="#454545" text-anchor="start" textLength="62.9" lengthAdjust="spacingAndGlyphs" stroke="#454545" stroke-width="0.15">2025-05-18</text>
<text x="1324.9" y="390.4" font-size="11.4" font-weight="400" fill="#454545" text-anchor="start" textLength="99.9" lengthAdjust="spacingAndGlyphs" stroke="#454545" stroke-width="0.15">Website/Booking ...</text>
<text x="1436.9" y="390.4" font-size="11.4" font-weight="400" fill="#454545" text-anchor="start" textLength="54.6" lengthAdjust="spacingAndGlyphs" stroke="#454545" stroke-width="0.15">Confirmed</text>
<text x="1659.3" y="390.4" font-size="11.4" font-weight="400" fill="#454545" text-anchor="start" textLength="65.2" lengthAdjust="spacingAndGlyphs" stroke="#454545" stroke-width="0.15">2025-05-20</text>
<text x="1770.9" y="390.4" font-size="11.4" font-weight="400" fill="#454545" text-anchor="start" stroke="#454545" stroke-width="0.15">-</text>
<text x="1880.9" y="390.4" font-size="11.4" font-weight="400" fill="#454545" text-anchor="start" textLength="46.0" lengthAdjust="spacingAndGlyphs" stroke="#454545" stroke-width="0.15">Package</text>
<text x="577.9" y="414.4" font-size="11.4" font-weight="400" fill="#454545" text-anchor="start" textLength="39.2" lengthAdjust="spacingAndGlyphs" stroke="#454545" stroke-width="0.15">6MX(2)</text>
<text x="800.7" y="414.4" font-size="11.4" font-weight="400" fill="#454545" text-anchor="start" textLength="99.6" lengthAdjust="spacingAndGlyphs" stroke="#454545" stroke-width="0.15">6-Bed Mixed Dorm</text>
<path d="M979.6 406.00 H980.9 V414.00 H979.6 V407.60 L977.4 408.80 V407.60 Z" fill="#454545"/>
<text x="1092.4" y="414.4" font-size="11.4" font-weight="400" fill="#454545" text-anchor="end" textLength="28.0" lengthAdjust="spacingAndGlyphs" stroke="#454545" stroke-width="0.15">18.00</text>
<text x="1101.9" y="414.4" font-size="11.4" font-weight="400" fill="#454545" text-anchor="start" textLength="99.4" lengthAdjust="spacingAndGlyphs" stroke="#454545" stroke-width="0.15">2025-05-17 23:5...</text>
<text x="1213.9" y="414.4" font-size="11.4" font-weight="400" fill="#454545" text-anchor="start" textLength="62.9" lengthAdjust="spacingAndGlyphs" stroke="#454545" stroke-width="0.15">2025-05-17</text>
<text x="1324.9" y="414.4" font-size="11.4" font-weight="400" fill="#454545" text-anchor="start" textLength="99.9" lengthAdjust="spacingAndGlyphs" stroke="#454545" stroke-width="0.15">Website/Booking ...</text>
<text x="1436.9" y="414.4" font-size="11.4" font-weight="400" fill="#454545" text-anchor="start" textLength="54.6" lengthAdjust="spacingAndGlyphs" stroke="#454545" stroke-width="0.15">Confirmed</text>
<text x="1659.3" y="414.4" font-size="11.4" font-weight="400" fill="#454545" text-anchor="start" textLength="65.2" lengthAdjust="spacingAndGlyphs" stroke="#454545" stroke-width="0.15">2025-05-20</text>
<text x="1770.9" y="414.4" font-size="11.4" font-weight="400" fill="#454545" text-anchor="start" stroke="#454545" stroke-width="0.15">-</text>
<text x="1880.9" y="414.4" font-size="11.4" font-weight="400" fill="#454545" text-anchor="start" textLength="46.0" lengthAdjust="spacingAndGlyphs" stroke="#454545" stroke-width="0.15">Package</text>
<text x="577.9" y="439.4" font-size="11.4" font-weight="400" fill="#454545" text-anchor="start" textLength="39.2" lengthAdjust="spacingAndGlyphs" stroke="#454545" stroke-width="0.15">6MX(2)</text>
<text x="800.7" y="439.4" font-size="11.4" font-weight="400" fill="#454545" text-anchor="start" textLength="99.6" lengthAdjust="spacingAndGlyphs" stroke="#454545" stroke-width="0.15">6-Bed Mixed Dorm</text>
<path d="M979.6 431.00 H980.9 V439.00 H979.6 V432.60 L977.4 433.80 V432.60 Z" fill="#454545"/>
<text x="1092.4" y="439.4" font-size="11.4" font-weight="400" fill="#454545" text-anchor="end" textLength="28.0" lengthAdjust="spacingAndGlyphs" stroke="#454545" stroke-width="0.15">18.00</text>
<text x="1101.9" y="439.4" font-size="11.4" font-weight="400" fill="#454545" text-anchor="start" textLength="99.4" lengthAdjust="spacingAndGlyphs" stroke="#454545" stroke-width="0.15">2025-05-16 23:5...</text>
<text x="1213.9" y="439.4" font-size="11.4" font-weight="400" fill="#454545" text-anchor="start" textLength="62.9" lengthAdjust="spacingAndGlyphs" stroke="#454545" stroke-width="0.15">2025-05-16</text>
<text x="1324.9" y="439.4" font-size="11.4" font-weight="400" fill="#454545" text-anchor="start" textLength="99.9" lengthAdjust="spacingAndGlyphs" stroke="#454545" stroke-width="0.15">Website/Booking ...</text>
<text x="1436.9" y="439.4" font-size="11.4" font-weight="400" fill="#454545" text-anchor="start" textLength="54.6" lengthAdjust="spacingAndGlyphs" stroke="#454545" stroke-width="0.15">Confirmed</text>
<text x="1659.3" y="439.4" font-size="11.4" font-weight="400" fill="#454545" text-anchor="start" textLength="65.2" lengthAdjust="spacingAndGlyphs" stroke="#454545" stroke-width="0.15">2025-05-20</text>
<text x="1770.9" y="439.4" font-size="11.4" font-weight="400" fill="#454545" text-anchor="start" stroke="#454545" stroke-width="0.15">-</text>
<text x="1880.9" y="439.4" font-size="11.4" font-weight="400" fill="#454545" text-anchor="start" textLength="46.0" lengthAdjust="spacingAndGlyphs" stroke="#454545" stroke-width="0.15">Package</text>
<text x="577.9" y="463.4" font-size="11.4" font-weight="400" fill="#454545" text-anchor="start" textLength="39.2" lengthAdjust="spacingAndGlyphs" stroke="#454545" stroke-width="0.15">6MX(2)</text>
<text x="800.7" y="463.4" font-size="11.4" font-weight="400" fill="#454545" text-anchor="start" textLength="99.6" lengthAdjust="spacingAndGlyphs" stroke="#454545" stroke-width="0.15">6-Bed Mixed Dorm</text>
<path d="M979.6 455.00 H980.9 V463.00 H979.6 V456.60 L977.4 457.80 V456.60 Z" fill="#454545"/>
<text x="1092.4" y="463.4" font-size="11.4" font-weight="400" fill="#454545" text-anchor="end" textLength="28.0" lengthAdjust="spacingAndGlyphs" stroke="#454545" stroke-width="0.15">18.00</text>
<text x="1101.9" y="463.4" font-size="11.4" font-weight="400" fill="#454545" text-anchor="start" textLength="99.4" lengthAdjust="spacingAndGlyphs" stroke="#454545" stroke-width="0.15">2025-05-15 23:5...</text>
<text x="1213.9" y="463.4" font-size="11.4" font-weight="400" fill="#454545" text-anchor="start" textLength="62.9" lengthAdjust="spacingAndGlyphs" stroke="#454545" stroke-width="0.15">2025-05-15</text>
<text x="1324.9" y="463.4" font-size="11.4" font-weight="400" fill="#454545" text-anchor="start" textLength="99.9" lengthAdjust="spacingAndGlyphs" stroke="#454545" stroke-width="0.15">Website/Booking ...</text>
<text x="1436.9" y="463.4" font-size="11.4" font-weight="400" fill="#454545" text-anchor="start" textLength="54.6" lengthAdjust="spacingAndGlyphs" stroke="#454545" stroke-width="0.15">Confirmed</text>
<text x="1659.3" y="463.4" font-size="11.4" font-weight="400" fill="#454545" text-anchor="start" textLength="65.2" lengthAdjust="spacingAndGlyphs" stroke="#454545" stroke-width="0.15">2025-05-20</text>
<text x="1770.9" y="463.4" font-size="11.4" font-weight="400" fill="#454545" text-anchor="start" stroke="#454545" stroke-width="0.15">-</text>
<text x="1880.9" y="463.4" font-size="11.4" font-weight="400" fill="#454545" text-anchor="start" textLength="46.0" lengthAdjust="spacingAndGlyphs" stroke="#454545" stroke-width="0.15">Package</text>
<rect x="688.00" y="283.70" width="92.00" height="184.10" rx="0" fill="#fcfcfe"/>
<defs><filter id="bl2" x="-50%" y="-150%" width="200%" height="400%"><feGaussianBlur stdDeviation="4"/></filter></defs>
<rect x="688" y="282.6" width="59" height="16" fill="#f0f2fd" filter="url(#bl2)"/>
<rect x="691" y="286.3" width="25" height="8.6" rx="4" fill="#e0e4fc" filter="url(#bl)"/>
<rect x="718" y="286.3" width="23" height="8.6" rx="4" fill="#e0e4fc" filter="url(#bl)"/>
<rect x="688" y="306.6" width="59" height="16" fill="#f0f2fd" filter="url(#bl2)"/>
<rect x="691" y="310.3" width="25" height="8.6" rx="4" fill="#e0e4fc" filter="url(#bl)"/>
<rect x="718" y="310.3" width="23" height="8.6" rx="4" fill="#e0e4fc" filter="url(#bl)"/>
<rect x="688" y="330.6" width="59" height="16" fill="#f0f2fd" filter="url(#bl2)"/>
<rect x="691" y="334.3" width="25" height="8.6" rx="4" fill="#e0e4fc" filter="url(#bl)"/>
<rect x="718" y="334.3" width="23" height="8.6" rx="4" fill="#e0e4fc" filter="url(#bl)"/>
<rect x="688" y="354.6" width="74" height="16" fill="#f0f2fd" filter="url(#bl2)"/>
<rect x="691" y="358.3" width="32" height="8.6" rx="4" fill="#e0e4fc" filter="url(#bl)"/>
<rect x="726" y="358.3" width="30" height="8.6" rx="4" fill="#e0e4fc" filter="url(#bl)"/>
<rect x="688" y="378.6" width="74" height="16" fill="#f0f2fd" filter="url(#bl2)"/>
<rect x="691" y="382.3" width="32" height="8.6" rx="4" fill="#e0e4fc" filter="url(#bl)"/>
<rect x="726" y="382.3" width="30" height="8.6" rx="4" fill="#e0e4fc" filter="url(#bl)"/>
<rect x="688" y="402.6" width="74" height="16" fill="#f0f2fd" filter="url(#bl2)"/>
<rect x="691" y="406.3" width="32" height="8.6" rx="4" fill="#e0e4fc" filter="url(#bl)"/>
<rect x="726" y="406.3" width="30" height="8.6" rx="4" fill="#e0e4fc" filter="url(#bl)"/>
<rect x="688" y="427.6" width="74" height="16" fill="#f0f2fd" filter="url(#bl2)"/>
<rect x="691" y="431.3" width="32" height="8.6" rx="4" fill="#e0e4fc" filter="url(#bl)"/>
<rect x="726" y="431.3" width="30" height="8.6" rx="4" fill="#e0e4fc" filter="url(#bl)"/>
<rect x="688" y="451.6" width="74" height="16" fill="#f0f2fd" filter="url(#bl2)"/>
<rect x="691" y="455.3" width="32" height="8.6" rx="4" fill="#e0e4fc" filter="url(#bl)"/>
<rect x="726" y="455.3" width="30" height="8.6" rx="4" fill="#e0e4fc" filter="url(#bl)"/>
<defs><filter id="sh" x="-10%" y="-20%" width="120%" height="150%"><feDropShadow dx="0" dy="2.5" stdDeviation="3" flood-color="#000" flood-opacity="0.28"/></filter></defs>
<rect x="454.60" y="187.60" width="325.00" height="87.90" rx="3" fill="#fff" filter="url(#sh)"/>
<rect x="454.60" y="186.40" width="77.40" height="8.20" rx="0" fill="#f8b1b5"/>
<line x1="454.60" y1="190.30" x2="532.00" y2="190.30" stroke="#f1a9ae" stroke-width="0.8"/>
<rect x="457.00" y="194.20" width="319.00" height="77.80" rx="0" fill="#f8b1b5"/>
<text x="473.6" y="224.5" font-size="12" font-weight="400" fill="#2f2a3c" text-anchor="start" textLength="84.3" lengthAdjust="spacingAndGlyphs" stroke="#2f2a3c" stroke-width="0.2">Quantity - sum</text>
<text x="760.0" y="224.5" font-size="11.3" font-weight="400" fill="#2f2a3c" text-anchor="end" textLength="10.0" lengthAdjust="spacingAndGlyphs" stroke="#2f2a3c" stroke-width="0.25">10</text>
<text x="473.6" y="250.6" font-size="12" font-weight="400" fill="#2f2a3c" text-anchor="start" textLength="71.4" lengthAdjust="spacingAndGlyphs" stroke="#2f2a3c" stroke-width="0.2">Debits - sum</text>
<text x="760.0" y="250.6" font-size="11.6" font-weight="400" fill="#2f2a3c" text-anchor="end" textLength="33.5" lengthAdjust="spacingAndGlyphs" stroke="#2f2a3c" stroke-width="0.25">180.00</text>
<rect x="247.00" y="627.00" width="231.70" height="223.00" rx="3" fill="#fff" filter="url(#sh)"/>
<defs><filter id="sh2" x="-50%" y="-50%" width="200%" height="200%"><feDropShadow dx="-0.5" dy="1" stdDeviation="2" flood-color="#000" flood-opacity="0.18"/></filter></defs>
<path d="M248 743 L233.7 760 L248 777 Z" fill="#fff" filter="url(#sh2)"/>
<rect x="247.50" y="735.00" width="12.50" height="50.00" rx="0" fill="#fff"/>
<text x="260.0" y="654.0" font-size="16.5" font-weight="400" fill="#1b2547" text-anchor="start" textLength="114.7" lengthAdjust="spacingAndGlyphs">Group dates by</text>
<path d="M459.5 634 L467.5 642 M467.5 634 L459.5 642" fill="none" stroke="#666" stroke-width="2.1"/>
<circle cx="266.80" cy="672.60" r="6.30" fill="#fff" stroke="#777" stroke-width="1.2"/>
<text x="281.3" y="676.9" font-size="12" font-weight="400" fill="#1b2547" text-anchor="start" textLength="24.2" lengthAdjust="spacingAndGlyphs">Year</text>
<circle cx="266.80" cy="700.80" r="6.30" fill="#fff" stroke="#777" stroke-width="1.2"/>
<text x="281.3" y="705.1" font-size="12" font-weight="400" fill="#1b2547" text-anchor="start" textLength="34.7" lengthAdjust="spacingAndGlyphs">Month</text>
<circle cx="266.80" cy="728.40" r="6.30" fill="#fff" stroke="#777" stroke-width="1.2"/>
<text x="281.3" y="732.7" font-size="12" font-weight="400" fill="#1b2547" text-anchor="start" textLength="91.9" lengthAdjust="spacingAndGlyphs">Month (stacked)</text>
<circle cx="266.80" cy="757.40" r="6.30" fill="#fff" stroke="#777" stroke-width="1.2"/>
<text x="281.3" y="761.7" font-size="12" font-weight="400" fill="#1b2547" text-anchor="start" textLength="30.0" lengthAdjust="spacingAndGlyphs">Week</text>
<circle cx="266.80" cy="800.80" r="6.30" fill="#fff" stroke="#777" stroke-width="1.2"/>
<text x="281.3" y="805.1" font-size="12" font-weight="400" fill="#1b2547" text-anchor="start" textLength="21.6" lengthAdjust="spacingAndGlyphs">Day</text>
<circle cx="266.80" cy="829.00" r="6.30" fill="#fff" stroke="#777" stroke-width="1.2"/>
<text x="281.3" y="833.3" font-size="12" font-weight="400" fill="#1b2547" text-anchor="start" textLength="78.2" lengthAdjust="spacingAndGlyphs">Day (stacked)</text>
<text x="283.0" y="779.7" font-size="12" font-weight="400" fill="#1b2547" text-anchor="start" textLength="99.4" lengthAdjust="spacingAndGlyphs">Monday - Sunday</text>
<path d="M321 668 L321 686 L325.5 682 L328.8 689.5 L331.5 688.3 L328.3 681 L334 681 Z" fill="#111" stroke="#fff" stroke-width="1"/>
<line x1="238.50" y1="953.50" x2="2000.00" y2="953.50" stroke="#e9ebef" stroke-width="1"/>
<rect x="254.00" y="964.00" width="35.75" height="20.00" rx="10" fill="#b5b5b5"/>
<circle cx="264.50" cy="974.00" r="8.00" fill="#f1f1f1"/>
<text x="299.0" y="978.0" font-size="13.5" font-weight="400" fill="#1b2547" text-anchor="start" textLength="38.0" lengthAdjust="spacingAndGlyphs">Totals</text>
<circle cx="349.00" cy="974.40" r="5.60" fill="#0f1838"/>
<text x="349.0" y="977.9" font-size="9.799999999999999" font-weight="700" fill="#ffffff" text-anchor="middle">?</text>
<rect x="384.00" y="964.00" width="35.60" height="20.00" rx="10" fill="#36bf98"/>
<circle cx="409.50" cy="974.00" r="8.00" fill="#f1f1f1"/>
<text x="428.8" y="978.0" font-size="13.5" font-weight="400" fill="#1b2547" text-anchor="start" textLength="43.0" lengthAdjust="spacingAndGlyphs">Details</text>
<circle cx="483.75" cy="974.40" r="5.60" fill="#0f1838"/>
<text x="483.8" y="977.9" font-size="9.799999999999999" font-weight="700" fill="#ffffff" text-anchor="middle">?</text>
<rect x="505.00" y="964.00" width="35.60" height="20.00" rx="10" fill="#d6d6d6"/>
<circle cx="515.50" cy="974.00" r="8.00" fill="#f6f6f6"/>
<text x="550.0" y="978.0" font-size="13.5" font-weight="400" fill="#c3c3c3" text-anchor="start" textLength="66.5" lengthAdjust="spacingAndGlyphs">Transpose</text>
<circle cx="628.50" cy="974.40" r="5.60" fill="#0f1838"/>
<text x="628.5" y="977.9" font-size="9.799999999999999" font-weight="700" fill="#ffffff" text-anchor="middle">?</text>
<rect x="10.85" y="65.00" width="220.05" height="843.60" rx="0" fill="none" stroke="#f1555f" stroke-width="5.3"/>
<path d="M0 0 L10.6 18.6 Q11 20.6 8.6 20.8 L3.1 14.6 L3.1 42.4 L-3.1 42.4 L-3.1 14.6 L-8.6 20.8 Q-11 20.6 -10.6 18.6 Z" fill="#f1555f" stroke="#f1555f" stroke-width="0.8" stroke-linejoin="round" transform="translate(1721.8 52.6)"/>
<path d="M0 0 L10.6 18.6 Q11 20.6 8.6 20.8 L3.1 14.6 L3.1 42.4 L-3.1 42.4 L-3.1 14.6 L-8.6 20.8 Q-11 20.6 -10.6 18.6 Z" fill="#f1555f" stroke="#f1555f" stroke-width="0.8" stroke-linejoin="round" transform="translate(1794 52.6)"/>
<path d="M0 0 L10.6 18.6 Q11 20.6 8.6 20.8 L3.1 14.6 L3.1 42.4 L-3.1 42.4 L-3.1 14.6 L-8.6 20.8 Q-11 20.6 -10.6 18.6 Z" fill="#f1555f" stroke="#f1555f" stroke-width="0.8" stroke-linejoin="round" transform="translate(1845 52.6)"/>
<path d="M0 0 L10.6 18.6 Q11 20.6 8.6 20.8 L3.1 14.6 L3.1 42.4 L-3.1 42.4 L-3.1 14.6 L-8.6 20.8 Q-11 20.6 -10.6 18.6 Z" fill="#f1555f" stroke="#f1555f" stroke-width="0.8" stroke-linejoin="round" transform="translate(1890.4 52.6)"/>
<path d="M0 0 L10.6 18.6 Q11 20.6 8.6 20.8 L3.1 14.6 L3.1 42.4 L-3.1 42.4 L-3.1 14.6 L-8.6 20.8 Q-11 20.6 -10.6 18.6 Z" fill="#f1555f" stroke="#f1555f" stroke-width="0.8" stroke-linejoin="round" transform="translate(1951 52.6)"/>
<path d="M0 0 L10.6 18.6 Q11 20.6 8.6 20.8 L3.1 14.6 L3.1 110 L-3.1 110 L-3.1 14.6 L-8.6 20.8 Q-11 20.6 -10.6 18.6 Z" fill="#f1555f" stroke="#f1555f" stroke-width="0.8" stroke-linejoin="round" transform="translate(1631 203.2) rotate(226.66)"/>
<circle cx="1721.70" cy="117.70" r="27.00" fill="#f1555f"/>
<text x="1721.7" y="131.2" font-size="34.5" font-weight="400" fill="#fff" text-anchor="middle" stroke="#fff" stroke-width="0.5">6</text>
<circle cx="1793.80" cy="117.70" r="27.00" fill="#f1555f"/>
<text x="1793.8" y="131.2" font-size="34.5" font-weight="400" fill="#fff" text-anchor="middle" stroke="#fff" stroke-width="0.5">7</text>
<circle cx="1844.20" cy="117.70" r="27.00" fill="#f1555f"/>
<text x="1844.2" y="131.2" font-size="34.5" font-weight="400" fill="#fff" text-anchor="middle" stroke="#fff" stroke-width="0.5">8</text>
<circle cx="1890.40" cy="117.70" r="27.00" fill="#f1555f"/>
<text x="1890.4" y="131.2" font-size="34.5" font-weight="400" fill="#fff" text-anchor="middle" stroke="#fff" stroke-width="0.5">9</text>
<circle cx="1950.90" cy="117.70" r="27.00" fill="#f1555f"/>
<path d="M1944.40 106.80 L1944.40 131.20 L1940.30 131.20 L1940.30 114.10 L1934.90 114.10 L1934.90 110.90 Q1939.10 110.70 1940.30 106.80 Z" fill="#fff"/>
<text x="1950.5" y="131.4" font-size="34.5" font-weight="400" fill="#fff" text-anchor="start" stroke="#fff" stroke-width="0.5">0</text>
<circle cx="544.40" cy="181.70" r="27.00" fill="#f1555f"/>
<path d="M538.50 169.60 L538.50 194.00 L534.40 194.00 L534.40 176.90 L529.00 176.90 L529.00 173.70 Q533.20 173.50 534.40 169.60 Z" fill="#fff"/>
<path d="M554.50 169.60 L554.50 194.00 L550.40 194.00 L550.40 176.90 L545.00 176.90 L545.00 173.70 Q549.20 173.50 550.40 169.60 Z" fill="#fff"/>
<circle cx="119.70" cy="912.90" r="27.00" fill="#f1555f"/>
<text x="119.7" y="925.2" font-size="34.5" font-weight="400" fill="#fff" text-anchor="middle" stroke="#fff" stroke-width="0.5">7</text>
</svg>
</body></html>
